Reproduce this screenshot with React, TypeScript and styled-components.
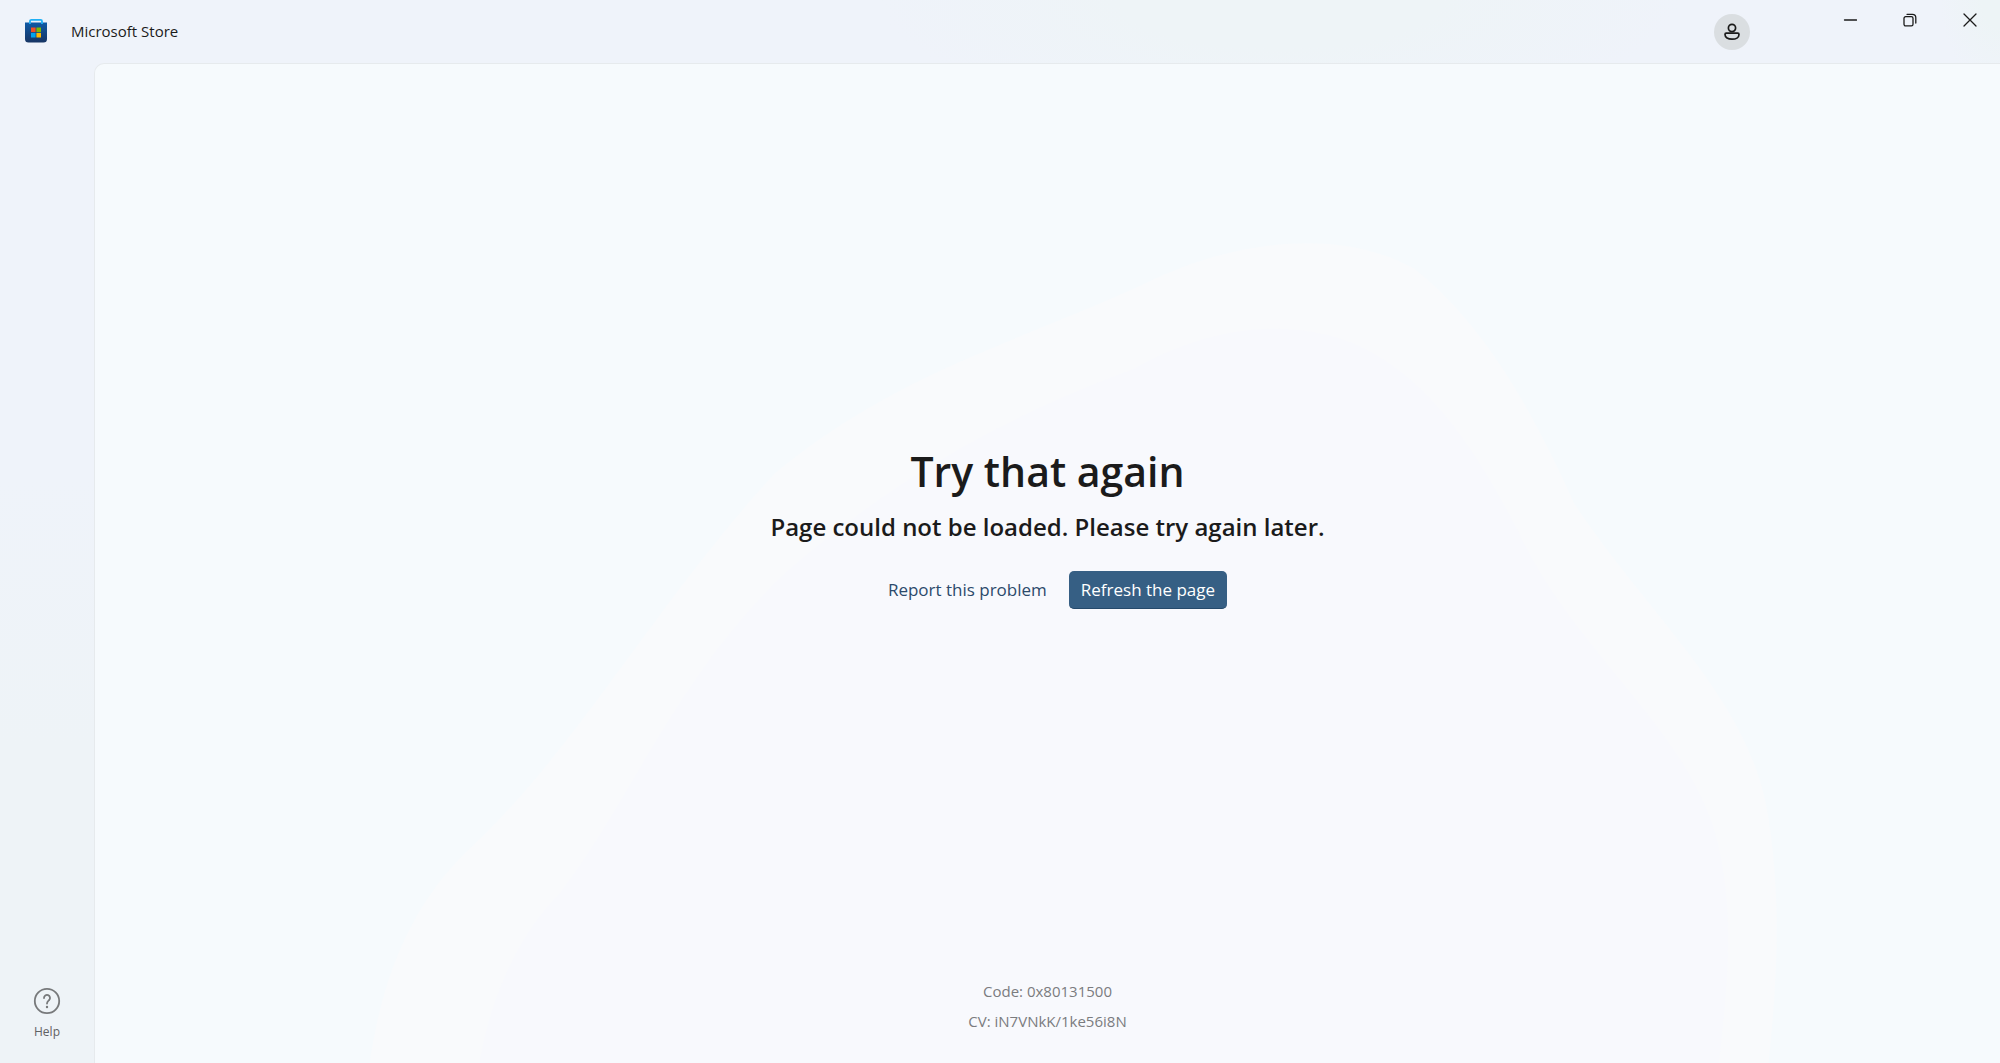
import React from "react";
import styled, { createGlobalStyle } from "styled-components";

const GlobalStyle = createGlobalStyle`
  *, *::before, *::after { box-sizing: border-box; }
  body { margin: 0; }
  button { font: inherit; color: inherit; border: 0; padding: 0; background: transparent; cursor: pointer; }
  a { text-decoration: none; }
  h1, h2, p { margin: 0; }
`;

const Shell = styled.div`
  display: grid;
  grid-template: 63px 1fr / 94px 1fr;
  min-height: 100vh;
  font-family: "Open Sans", "Noto Sans", sans-serif;
  color: #1b1b1b;
  background:
    radial-gradient(ellipse 20% 120px at 64% 0, #eef4f7 40%, transparent),
    radial-gradient(ellipse 3% 90px at 100% 0, #edf4f6 30%, transparent),
    linear-gradient(180deg, #eff3fa 45%, #eef3f7 70%);
`;

const TitleBar = styled.header`
  grid-column: 1 / -1;
  display: flex;
  align-items: flex-start;
`;

const Brand = styled.div`
  display: flex;
  align-items: center;
  gap: 23px;
  height: 62px;
  margin-right: auto;
  padding-left: 24px;
  font-size: 15px;
  line-height: 20px;
`;

const AccountButton = styled.button`
  display: grid;
  place-items: center;
  width: 36px;
  height: 36px;
  margin: 14px 70px 0 0;
  border-radius: 50%;
  background: #dadee1;
`;

const CaptionButton = styled.button`
  display: grid;
  place-items: center;
  width: 60px;
  height: 40px;
`;

const Sidebar = styled.nav`
  display: flex;
  flex-direction: column;
  justify-content: flex-end;
  align-items: center;
  padding-bottom: 22px;
`;

const HelpButton = styled.button`
  display: flex;
  flex-direction: column;
  align-items: center;
  gap: 8px;
  color: #5f6163;
  font-size: 12px;
  line-height: 18px;
`;

const Panel = styled.main`
  position: relative;
  display: grid;
  grid-template-rows: 1fr auto;
  overflow: hidden;
  border: solid #e6eaed;
  border-width: 1px 0 0 1px;
  border-top-left-radius: 10px;
  background: #f6fafd;
`;

const Backdrop = styled.svg`
  position: absolute;
  inset: 0;
  width: 100%;
  height: 100%;
`;

const Message = styled.section`
  position: relative;
  display: flex;
  flex-direction: column;
  align-items: center;
  justify-content: center;
  padding-top: 10px;
  text-align: center;
`;

const Title = styled.h1`
  font-size: 41px;
  line-height: 60px;
  font-weight: 600;
`;

const Subtitle = styled.h2`
  margin-top: 8px;
  font-size: 24px;
  line-height: 36px;
  font-weight: 600;
`;

const Actions = styled.div`
  display: flex;
  align-items: center;
  gap: 2px;
  margin-top: 26px;
  font-size: 17px;
  line-height: 24px;
`;

const ReportLink = styled.a`
  padding: 7px 20px;
  color: #2c4a6b;
`;

const RefreshButton = styled.button`
  height: 38px;
  padding: 1px 12px 0;
  border-radius: 5px;
  border-bottom: 1px solid #24496b;
  background: #365f84;
  color: #fff;
`;

const Diagnostics = styled.footer`
  position: relative;
  padding-bottom: 27px;
  text-align: center;
  font-size: 15px;
  line-height: 30px;
  color: #7b7c7f;
`;

function StoreLogo() {
  return (
    <svg width="24" height="26" viewBox="0 0 24 26" aria-hidden="true">
      <defs>
        <linearGradient id="bag" x1="0" y1="0" x2="0" y2="1">
          <stop offset="0" stopColor="#0f5aa6" />
          <stop offset="1" stopColor="#173564" />
        </linearGradient>
      </defs>
      <path d="M1 4.500h22V21a3.500 3.500 0 0 1-3.500 3.500h-15A3.500 3.500 0 0 1 1 21z" fill="url(#bag)" />
      <path d="M6 6V3.200A1.400 1.400 0 0 1 7.400 1.800h9.200A1.400 1.400 0 0 1 18 3.200V6" fill="none" stroke="#1fb0f5" strokeWidth="1.800" />
      <path fill="#f25022" d="M7 9.500h4.600v4.600H7z" />
      <path fill="#7fba00" d="M12.400 9.500H17v4.600h-4.600z" />
      <path fill="#00a4ef" d="M7 14.900h4.600v4.600H7z" />
      <path fill="#ffb900" d="M12.400 14.900H17v4.600h-4.600z" />
    </svg>
  );
}

function PersonIcon() {
  return (
    <svg width="18" height="18" viewBox="0 0 18 18" fill="none" stroke="#1b1b1b" strokeWidth="1.700" aria-hidden="true">
      <circle cx="9" cy="5" r="3.600" />
      <path d="M3.200 10.200h11.600a1.200 1.200 0 0 1 1.200 1.200c0 3-3 4.800-7 4.800s-7-1.800-7-4.800a1.200 1.200 0 0 1 1.200-1.200z" />
    </svg>
  );
}

function CaptionIcon({ d }: { d: string }) {
  return (
    <svg width="14" height="14" viewBox="0 0 14 14" fill="none" stroke="#1b1b1b" strokeWidth="1.300" strokeLinecap="round" aria-hidden="true">
      <path d={d} />
    </svg>
  );
}

const captionButtons = [
  { label: "Minimize", d: "M1.500 7h12" },
  { label: "Restore", d: "M2.600 3.700h5.800a1.600 1.600 0 0 1 1.600 1.600v6a1.600 1.600 0 0 1-1.600 1.600H2.600A1.600 1.600 0 0 1 1 11.300v-6a1.600 1.600 0 0 1 1.600-1.600zM4 1.300h5.400a3.400 3.400 0 0 1 3.400 3.400V10" },
  { label: "Close", d: "M1 1l12 12M13 1L1 13" },
];

function HelpIcon() {
  return (
    <svg width="28" height="28" viewBox="0 0 28 28" fill="none" stroke="#77797b" strokeWidth="1.800" aria-hidden="true">
      <circle cx="14" cy="14" r="12.200" />
      <path d="M11 11a3 3 0 1 1 5.200 2c-1.200 1.200-2.200 1.900-2.200 3.600" strokeLinecap="round" />
      <circle cx="14" cy="20" r="1.200" fill="#77797b" stroke="none" />
    </svg>
  );
}

export default function App() {
  return (
    <>
      <GlobalStyle />
      <Shell>
        <TitleBar>
          <Brand>
            <StoreLogo />
            <span>Microsoft Store</span>
          </Brand>
          <AccountButton aria-label="Account">
            <PersonIcon />
          </AccountButton>
          {captionButtons.map((b) => (
            <CaptionButton key={b.label} aria-label={b.label}>
              <CaptionIcon d={b.d} />
            </CaptionButton>
          ))}
        </TitleBar>
        <Sidebar>
          <HelpButton>
            <HelpIcon />
            Help
          </HelpButton>
        </Sidebar>
        <Panel>
          <Backdrop viewBox="0 0 1906 1000" preserveAspectRatio="none" aria-hidden="true">
            <path fill="#f9fafc" d="M270 1040C280 930 310 850 370 790C480 690 560 540 680 410C800 310 920 280 1050 220C1130 180 1240 160 1320 205C1390 260 1440 350 1480 440C1560 560 1660 640 1675 760C1690 860 1680 950 1670 1040Z" />
            <path fill="#f8f9fd" d="M380 1040C385 960 415 880 465 830C535 740 580 615 690 510C810 405 930 345 1040 305C1110 265 1190 252 1260 280C1340 315 1390 400 1430 480C1480 580 1570 650 1610 740C1650 830 1630 950 1620 1040Z" />
          </Backdrop>
          <Message>
            <Title>Try that again</Title>
            <Subtitle>Page could not be loaded. Please try again later.</Subtitle>
            <Actions>
              <ReportLink href="#report">Report this problem</ReportLink>
              <RefreshButton>Refresh the page</RefreshButton>
            </Actions>
          </Message>
          <Diagnostics>
            <p>Code: 0x80131500</p>
            <p>CV: iN7VNkK/1ke56i8N</p>
          </Diagnostics>
        </Panel>
      </Shell>
    </>
  );
}
